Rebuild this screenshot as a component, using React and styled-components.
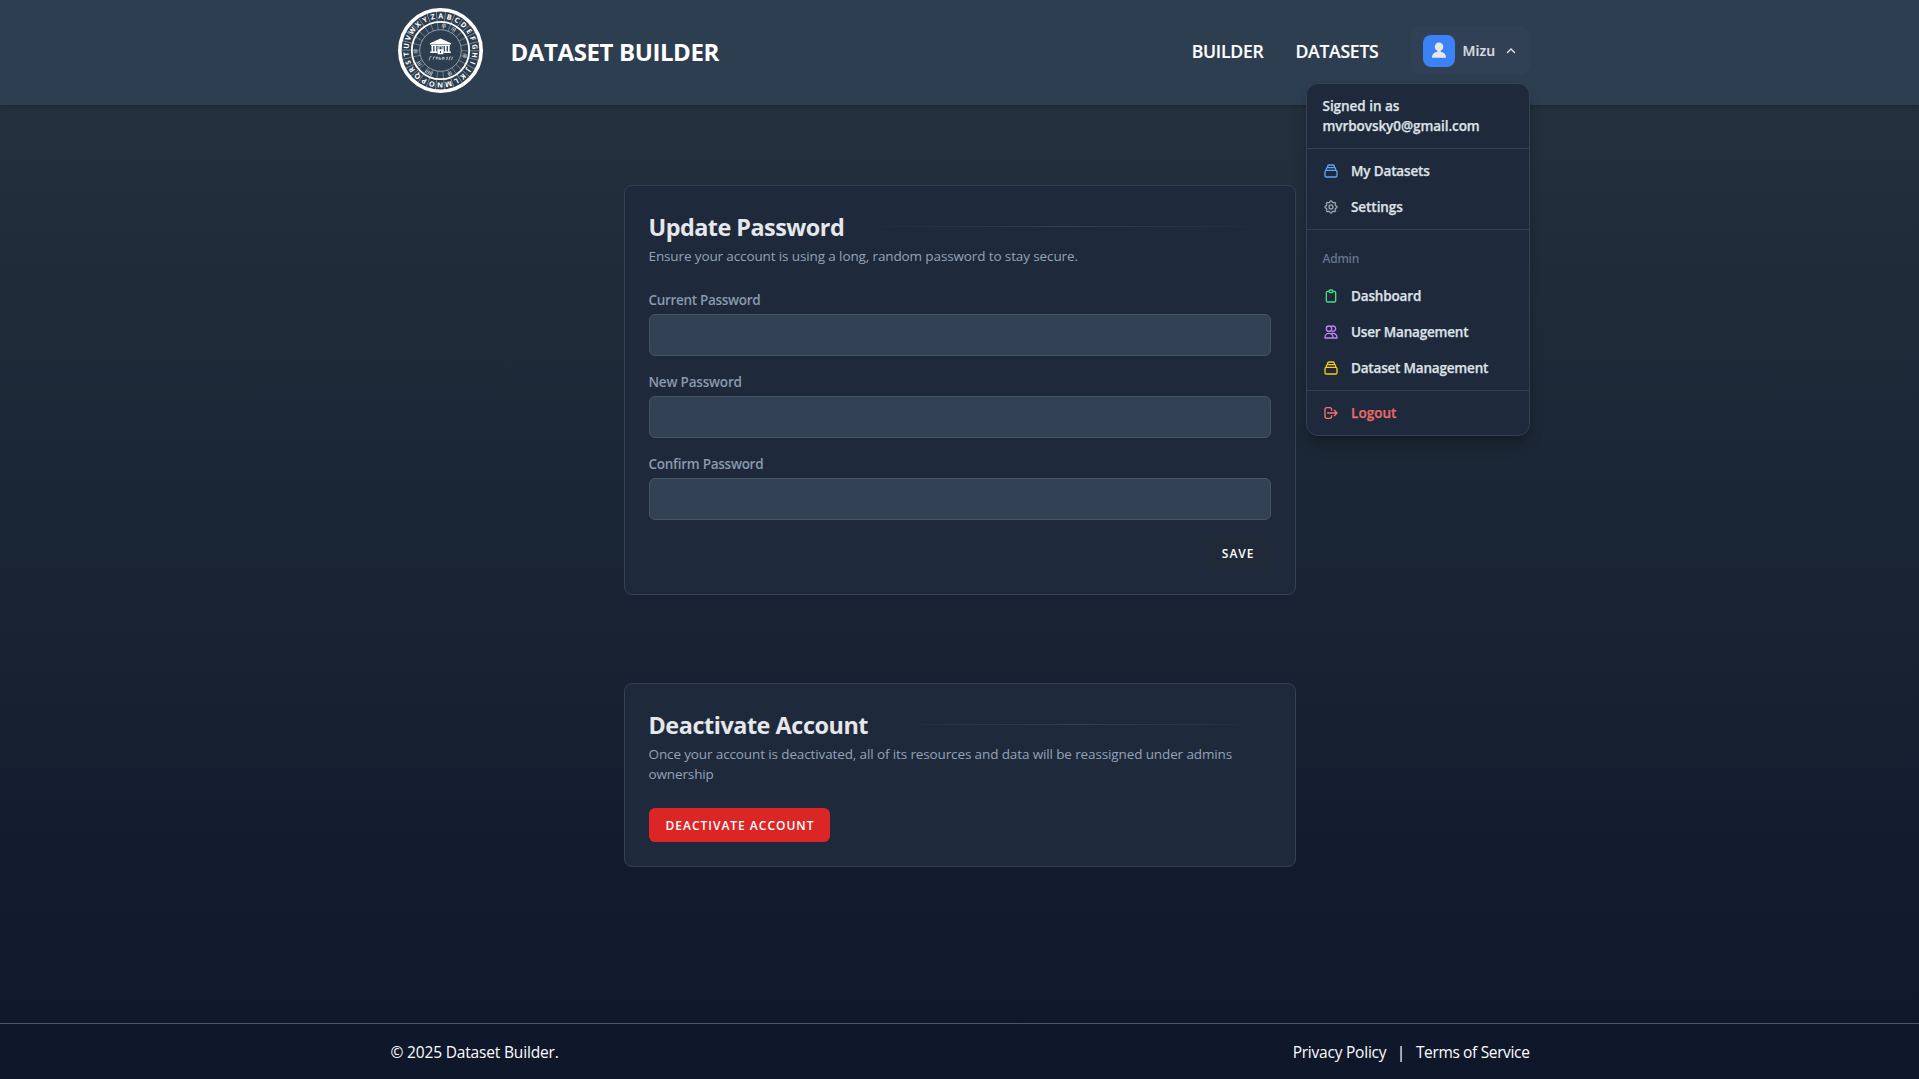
import React from 'react';
import styled, { createGlobalStyle } from 'styled-components';

const GlobalStyle = createGlobalStyle`
  *, *::before, *::after { box-sizing: border-box; }
  body {
    margin: 0;
    background: #0f172a;
    font-family: "Segoe UI", "Open Sans", "Noto Sans", sans-serif;
    color: #e5e7eb;
  }
  h1, h2, p { margin: 0; }
  a { color: inherit; text-decoration: none; }
`;

const tracking = ({ $ls = 0 }) => `letter-spacing: ${$ls}px; white-space: nowrap;`;

const Page = styled.div`
  display: flex;
  flex-direction: column;
  min-height: 1079px;
  background: linear-gradient(to bottom, #24313e 6%, #0f172a 98%);
`;

const Container = styled.div`
  display: flex;
  align-items: center;
  justify-content: space-between;
  width: 1140px;
  margin: 0 auto;
`;

const Header = styled.header`
  display: flex;
  height: 105px;
  padding-bottom: 4px;
  background: #2d3e50;
  box-shadow: 0 1px 4px rgba(0, 0, 0, 0.25);
`;

const Brand = styled.a`
  display: flex;
  align-items: center;
  gap: 27.5px;
  padding-left: 8.5px;
`;

const BrandName = styled.h1`
  padding-top: 2px;
  font-size: 24px;
  line-height: 32px;
  font-weight: 700;
  color: #fff;
  ${tracking}
`;

const Nav = styled.nav`
  display: flex;
  align-items: center;
  gap: 32px;
  padding-top: 1px;
`;

const NavLink = styled.a`
  font-size: 17.6px;
  line-height: 28px;
  font-weight: 600;
  color: #fff;
  -webkit-text-stroke: 0.15px;
  ${tracking}
`;

const UserMenu = styled.div`
  position: relative;
`;

const UserButton = styled.button`
  display: flex;
  align-items: center;
  gap: 8px;
  width: 119px;
  height: 48px;
  padding: 0 13px 0 12px;
  border: 0;
  border-radius: 8px;
  background: rgba(51, 65, 85, 0.7);
  color: #e5e7eb;
  font-family: inherit;
`;

const Avatar = styled.span`
  display: flex;
  justify-content: center;
  flex: none;
  width: 32px;
  height: 32px;
  padding-top: 7px;
  border-radius: 8px;
  background: #3b82f6;
`;

const UserName = styled.span`
  flex: 1;
  text-align: left;
  font-size: 14px;
  line-height: 20px;
  font-weight: 600;
  color: #d6dae1;
  -webkit-text-stroke: 0.2px;
  ${tracking}
`;

const Dropdown = styled.div`
  position: absolute;
  z-index: 10;
  top: 56px;
  right: 0;
  width: 224px;
  border: 1px solid #334155;
  border-radius: 12px;
  background: #1e293b;
  box-shadow: 0 10px 15px -3px rgba(0, 0, 0, 0.25), 0 4px 6px -4px rgba(0, 0, 0, 0.25);
`;

const SignedIn = styled.div`
  padding: 12px 16px;
  border-bottom: 1px solid #334155;
  font-size: 13.5px;
  line-height: 20px;
  font-weight: 600;
  color: #dfe2e7;
  -webkit-text-stroke: 0.25px;
`;

const Line = styled.p`
  ${tracking}
`;

const MenuGroup = styled.div`
  padding: 4px 0;
  & + & { border-top: 1px solid #334155; }
`;

const MenuHeading = styled.div`
  padding: 17px 16px 11px;
  height: 44px;
  font-size: 12px;
  line-height: 16px;
  font-weight: 600;
  color: #64748b;
  ${tracking}
`;

const MenuItem = styled.a`
  display: flex;
  align-items: center;
  gap: 12.5px;
  height: 36px;
  padding: 0 16px;
  font-size: 13.5px;
  line-height: 20px;
  font-weight: 600;
  color: ${({ $danger }) => ($danger ? '#e96a6a' : '#dfe2e7')};
  -webkit-text-stroke: 0.25px;
  ${tracking}
`;

const OutlineIcon = styled.svg`
  flex: none;
  width: ${({ $size }) => $size}px;
  height: ${({ $size }) => $size}px;
  margin: 0 ${({ $size }) => (16 - $size) / 2}px;
  fill: none;
  stroke: ${({ $color }) => $color};
  stroke-width: ${({ $weight }) => $weight};
  stroke-linecap: round;
  stroke-linejoin: round;
`;

const Main = styled.main`
  display: flex;
  flex: 1;
  flex-direction: column;
  align-items: center;
  gap: 88px;
  padding-top: 80px;
`;

const Card = styled.section`
  width: 672px;
  padding: 24px;
  border: 1px solid #334155;
  border-radius: 8px;
  background: #1e293b;
`;

const CardHeader = styled.div`
  display: flex;
  align-items: center;
  gap: 16px;
  height: 32px;
`;

const CardTitle = styled.h2`
  padding-top: 1px;
  font-size: 23.4px;
  line-height: 32px;
  font-weight: 700;
  color: #e5e7eb;
  ${tracking}
`;

const Rule = styled.span`
  flex: 1;
  height: 1px;
  background: linear-gradient(to right, transparent, #334155, transparent);
`;

const CardText = styled.div`
  margin: 4px 0 24px;
  font-size: 13.5px;
  line-height: 20px;
  color: #94a3b8;
`;

const Form = styled.form`
  display: flex;
  flex-direction: column;
  gap: 16px;
`;

const Field = styled.label`
  display: flex;
  flex-direction: column;
  gap: 4px;
`;

const FieldLabel = styled.span`
  font-size: 13.5px;
  line-height: 20px;
  font-weight: 600;
  color: #8a9ab0;
  ${tracking}
`;

const Input = styled.input`
  width: 100%;
  height: 42px;
  padding: 0 12px;
  border: 1px solid #475569;
  border-radius: 6px;
  outline: none;
  background: #334155;
`;

const Actions = styled.div`
  display: flex;
  justify-content: flex-end;
`;

const Button = styled.button`
  height: 34px;
  padding: 2px 16px 0 17px;
  border: 0;
  border-radius: 6px;
  background: ${({ $danger }) => ($danger ? '#dc2626' : '#1f2937')};
  color: #fff;
  font-family: inherit;
  font-size: 12px;
  line-height: 16px;
  font-weight: 600;
  ${tracking}
`;

const Footer = styled.footer`
  display: flex;
  height: 56px;
  border-top: 1px solid #4b5563;
  background: #0f172a;
  color: #fff;
  font-size: 15.5px;
  line-height: 24px;
`;

const FooterText = styled.span`
  padding-left: ${({ $inset = 0 }) => $inset}px;
  ${tracking}
`;

const FooterLinks = styled.div`
  display: flex;
  align-items: center;
  gap: 10.5px;
`;

const ICONS = {
  collection: ['M19 11H5m14 0a2 2 0 012 2v6a2 2 0 01-2 2H5a2 2 0 01-2-2v-6a2 2 0 012-2m14 0V9a2 2 0 00-2-2M5 11V9a2 2 0 012-2m0 0V5a2 2 0 012-2h6a2 2 0 012 2v2M7 7h10'],
  cog: [
    'M10.325 4.317c.426-1.756 2.924-1.756 3.35 0a1.724 1.724 0 002.573 1.066c1.543-.94 3.31.826 2.37 2.37a1.724 1.724 0 001.065 2.572c1.756.426 1.756 2.924 0 3.35a1.724 1.724 0 00-1.066 2.573c.94 1.543-.826 3.31-2.37 2.37a1.724 1.724 0 00-2.572 1.065c-.426 1.756-2.924 1.756-3.35 0a1.724 1.724 0 00-2.573-1.066c-1.543.94-3.31-.826-2.37-2.37a1.724 1.724 0 00-1.065-2.572c-1.756-.426-1.756-2.924 0-3.35a1.724 1.724 0 001.066-2.573c-.94-1.543.826-3.31 2.37-2.37.996.608 2.296.07 2.572-1.065z',
    'M15 12a3 3 0 11-6 0 3 3 0 016 0z',
  ],
  clipboard: ['M9 5H7a2 2 0 00-2 2v12a2 2 0 002 2h10a2 2 0 002-2V7a2 2 0 00-2-2h-2M9 5a2 2 0 002 2h2a2 2 0 002-2M9 5a2 2 0 012-2h2a2 2 0 012 2'],
  users: ['M12 4.354a4 4 0 110 5.292M15 21H3v-1a6 6 0 0112 0v1zm0 0h6v-1a6 6 0 00-9-5.197M13 7a4 4 0 11-8 0 4 4 0 018 0z'],
  logout: ['M17 16l4-4m0 0l-4-4m4 4H7m6 4v1a3 3 0 01-3 3H6a3 3 0 01-3-3V7a3 3 0 013-3h4a3 3 0 013 3v1'],
  chevronUp: ['M5 15l7-7 7 7'],
};

function Icon({ name, color, size = 16, weight = 2 }) {
  return (
    <OutlineIcon viewBox="0 0 24 24" $color={color} $size={size} $weight={weight}>
      {ICONS[name].map((d) => <path key={d} d={d} />)}
    </OutlineIcon>
  );
}

const LETTERS = 'ABCDEFGHIJKLMNOPQRSTUVWXYZ'.split('');
const STEP = 360 / 26;

function Logo() {
  return (
    <svg width="85" height="85" viewBox="-42.5 -42.5 85 85" fill="none" stroke="#fff">
      <circle r="40.7" strokeWidth="3.6" />
      <circle r="28.7" strokeWidth="1.8" />
      <circle r="20.8" strokeWidth="0.8" opacity="0.6" />
      {LETTERS.map((letter, i) => (
        <g key={letter} transform={`rotate(${i * STEP + 0.6})`}>
          <text
            y="-32"
            textAnchor="middle"
            fontSize="7.2"
            fontWeight="700"
            fontFamily="Open Sans, sans-serif"
            fill="#fff"
            stroke="none"
          >
            {letter}
          </text>
          <path d="M0 -39V-29.5" transform={`rotate(${STEP / 2})`} strokeWidth="0.6" opacity="0.6" />
          <path d="M0 -28V-21" transform={`rotate(${STEP / 2})`} strokeWidth="0.6" opacity="0.5" />
        </g>
      ))}
      <g strokeWidth="0.7" opacity="0.6">
        {[8, 32, 102, 158, 204, 212, 238, 268].map((a) => (
          <path key={a} transform={`rotate(${a})`} d="M-1.6 -22.8V-26.4H1.6V-23.4M-1.4 -24.6H1.2M0 -26V-22.6" />
        ))}
      </g>
      <g fill="#fff" stroke="none">
        <path d="M-10.6 -7.2L0 -12L10.6 -7.2V-6H-10.6z" />
        <path d="M-9.4 -5.4H9.4V-4.6H-9.4zM-9 -4.6h1.7v5.6H-9zM-6 -4.6h1.7v5.6H-6zM-3 -4.6h.9v5.6H-3zM2.2 -4.6h.9v5.6h-.9zM4.4 -4.6h1.7v5.6H4.4zM7.4 -4.6h1.7v5.6H7.4zM-10.3 1H-3V2.4H-10.3zM3 1H10.3V2.4H3z" />
        <rect x="-2.9" y="-1.2" width="5.8" height="5" rx="0.5" />
      </g>
      <path d="M-1.6 -1V-2.6A1.6 1.6 0 0 1 1.6 -2.6V-1" strokeWidth="0.9" />
      <path d="M0 0.4V2.4" stroke="#2d3e50" strokeWidth="1.1" />
      <path
        d="M-11.4 9.8L-10.2 6L-9 5.8M-7.4 9L-6.8 6.4H-5.4M-4.2 9V6.6L-2.6 6.8V8.8M-1.2 6.4V8.8H0.4V7.2M2 8.8L2.2 6.8H3.6V8.6H2M5.6 6.8H7L6.6 8.8H5.4M8.6 9.8L9.2 6.6L10.4 6.2M11 9.6L12 6.2"
        strokeWidth="0.8"
        opacity="0.75"
      />
    </svg>
  );
}

function PersonIcon() {
  return (
    <svg width="14" height="16" viewBox="0 0 14 16" fill="#e5e7eb">
      <circle cx="7" cy="4.7" r="4.3" />
      <path d="M5.4 8h3.2v1.8c3.2.4 5.4 2.5 5.4 5.9H0c0-3.4 2.2-5.5 5.4-5.9z" />
    </svg>
  );
}

const accountItems = [
  { label: 'My Datasets', icon: 'collection', color: '#60a5fa', ls: -0.15 },
  { label: 'Settings', icon: 'cog', color: '#9ca3af', ls: -0.06 },
];

const adminItems = [
  { label: 'Dashboard', icon: 'clipboard', color: '#4ade80', ls: -0.16 },
  { label: 'User Management', icon: 'users', color: '#c084fc', ls: -0.19 },
  { label: 'Dataset Management', icon: 'collection', color: '#facc15', ls: -0.19 },
];

const fields = [
  { label: 'Current Password', ls: -0.31 },
  { label: 'New Password', ls: -0.2 },
  { label: 'Confirm Password', ls: -0.26 },
];

function MenuItems({ items }) {
  return items.map(({ label, icon, color, ls }) => (
    <MenuItem key={label} href="#" $ls={ls}>
      <Icon name={icon} color={color} />
      {label}
    </MenuItem>
  ));
}

function AccountMenu() {
  return (
    <UserMenu>
      <UserButton type="button">
        <Avatar><PersonIcon /></Avatar>
        <UserName $ls={0.1}>Mizu</UserName>
        <Icon name="chevronUp" color="#e5e7eb" size={12} weight={2.8} />
      </UserButton>
      <Dropdown>
        <SignedIn>
          <Line $ls={-0.04}>Signed in as</Line>
          <Line $ls={-0.06}>mvrbovsky0@gmail.com</Line>
        </SignedIn>
        <MenuGroup>
          <MenuItems items={accountItems} />
        </MenuGroup>
        <MenuGroup>
          <MenuHeading $ls={-0.25}>Admin</MenuHeading>
          <MenuItems items={adminItems} />
        </MenuGroup>
        <MenuGroup>
          <MenuItem href="#" $danger $ls={0.04}>
            <Icon name="logout" color="#f87171" />
            Logout
          </MenuItem>
        </MenuGroup>
      </Dropdown>
    </UserMenu>
  );
}

export default function App() {
  return (
    <>
      <GlobalStyle />
      <Page>
        <Header>
          <Container>
            <Brand href="#">
              <Logo />
              <BrandName $ls={-0.396}>DATASET BUILDER</BrandName>
            </Brand>
            <Nav>
              <NavLink href="#" $ls={-0.26}>BUILDER</NavLink>
              <NavLink href="#" $ls={-0.27}>DATASETS</NavLink>
              <AccountMenu />
            </Nav>
          </Container>
        </Header>
        <Main>
          <Card>
            <CardHeader>
              <CardTitle $ls={-0.52}>Update Password</CardTitle>
              <Rule />
            </CardHeader>
            <CardText>
              <Line $ls={-0.12}>Ensure your account is using a long, random password to stay secure.</Line>
            </CardText>
            <Form>
              {fields.map(({ label, ls }) => (
                <Field key={label}>
                  <FieldLabel $ls={ls}>{label}</FieldLabel>
                  <Input type="password" />
                </Field>
              ))}
              <Actions>
                <Button type="button" $ls={1}>SAVE</Button>
              </Actions>
            </Form>
          </Card>
          <Card>
            <CardHeader>
              <CardTitle $ls={-0.45}>Deactivate Account</CardTitle>
              <Rule />
            </CardHeader>
            <CardText>
              <Line $ls={-0.122}>
                Once your account is deactivated, all of its resources and data will be reassigned under admins
              </Line>
              <Line $ls={-0.12}>ownership</Line>
            </CardText>
            <Button type="button" $danger $ls={0.99}>DEACTIVATE ACCOUNT</Button>
          </Card>
        </Main>
        <Footer>
          <Container>
            <FooterText $inset={1} $ls={-0.17}>© 2025 Dataset Builder.</FooterText>
            <FooterLinks>
              <FooterText as="a" href="#" $ls={-0.22}>Privacy Policy</FooterText>
              <span>|</span>
              <FooterText as="a" href="#" $ls={-0.35}>Terms of Service</FooterText>
            </FooterLinks>
          </Container>
        </Footer>
      </Page>
    </>
  );
}
